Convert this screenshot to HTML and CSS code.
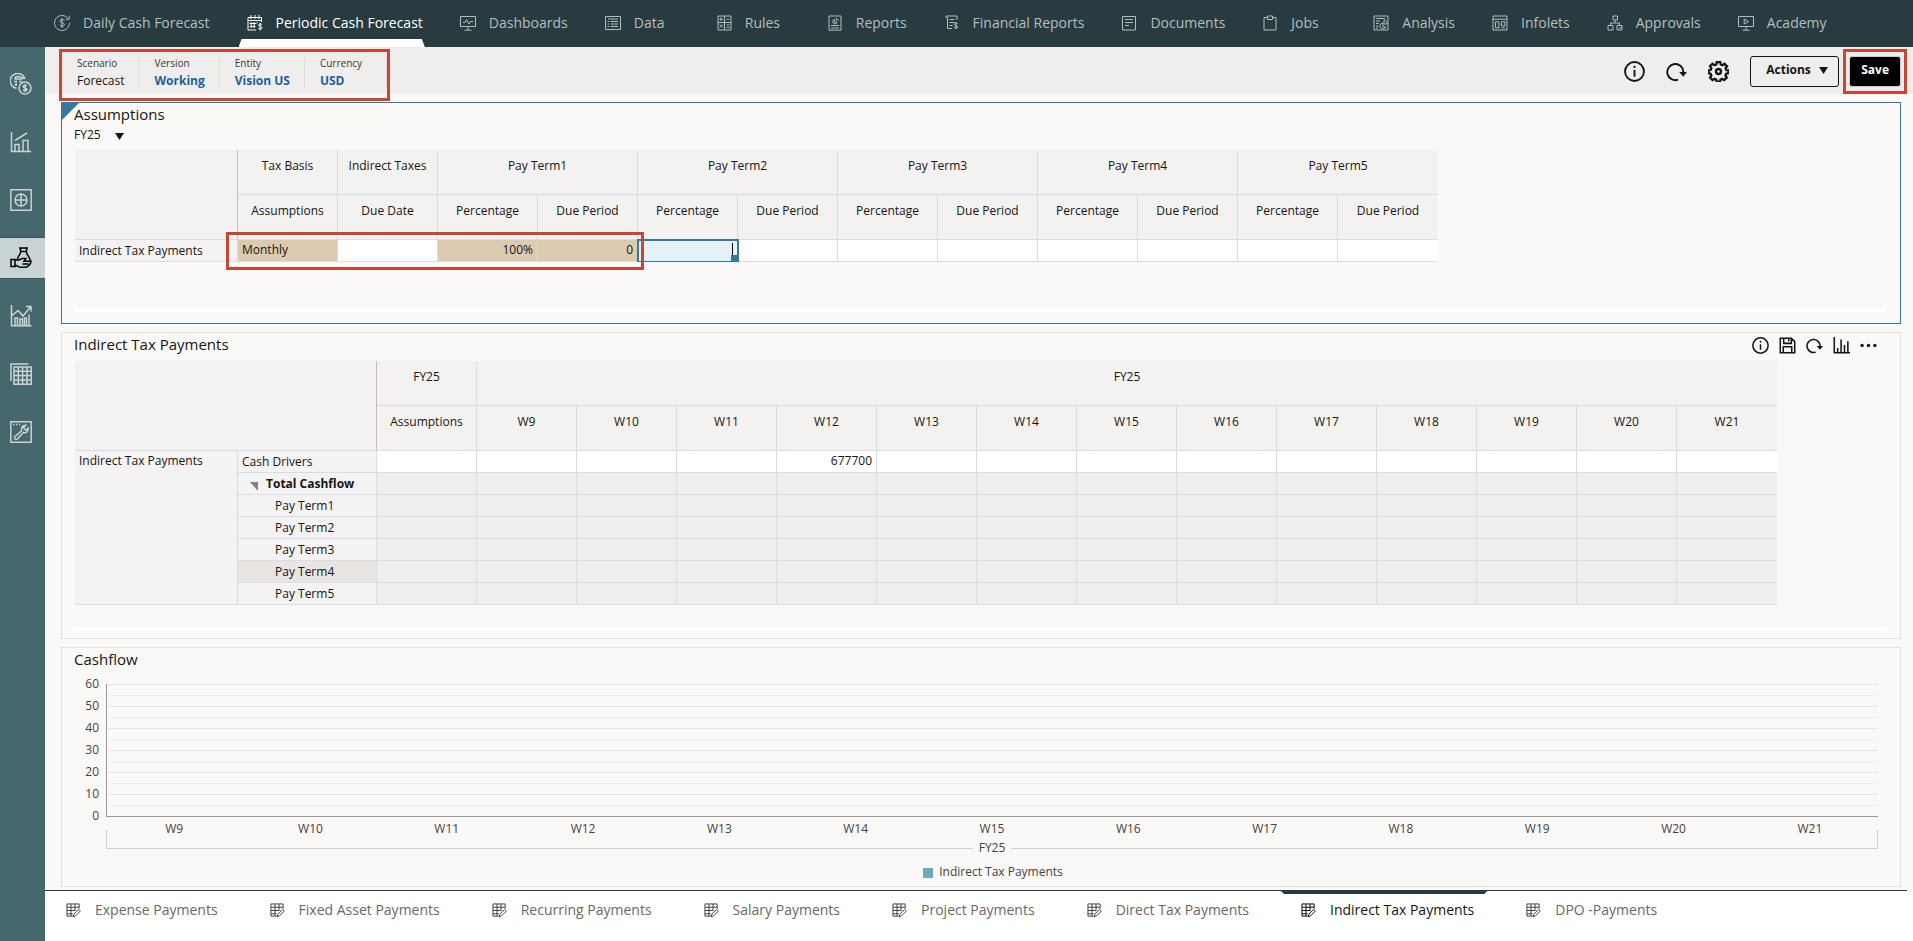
FILE: index.html
```html
<!DOCTYPE html>
<html lang="en">
<head>
<meta charset="utf-8">
<title>Periodic Cash Forecast</title>
<link rel="stylesheet" href="styles.css">
</head>
<body>
<svg class="defs" aria-hidden="true">
  <symbol id="i-info" viewBox="0 0 20 20"><circle cx="10" cy="10" r="9"/><path d="M10 8.5v6.5"/><circle class="dot" cx="10" cy="5.6" r="1.1"/></symbol>
  <symbol id="i-refresh" viewBox="0 0 20 20"><path d="M11.500 17.800A7.700 7.700 0 1 1 16.600 10.500v1"/><path class="dot" d="M12.600 10.500h7.400l-3.600 4.600z"/></symbol>
  <symbol id="i-gear" viewBox="0 0 20 20"><path d="M8.300 1h3.400l.4 2.300 1.700.7 1.900-1.400 2.400 2.400-1.400 1.900.7 1.700 1.900.2v2.900l-2 .5-.7 1.700 1.300 1.900-2.400 2.400-1.900-1.300-1.700.7-.4 2.100H8.300l-.4-2.100-1.700-.7-1.900 1.300-2.400-2.400 1.300-1.900-.7-1.700-2-.5V8.800l2-.2.7-1.700L1.900 5l2.400-2.400L6.200 4l1.700-.7z"/><circle cx="10" cy="10" r="2.400"/></symbol>
  <symbol id="i-form" viewBox="0 0 16 16"><path d="M14 6V1H1v13h6M1 4.500h13M1 8h9M1 11.500h6M5.300 1v13M9.600 1v7M7.500 14.800l1-3 5-5 1.800 1.800-5 5z"/></symbol>
</svg>

<header class="topbar">
  <nav class="topnav" aria-label="Clusters">
    <a href="#daily" class="topnav__item"><svg viewBox="0 0 16 16"><path d="M14 3.500A7.500 7.500 0 1 0 15.500 8M15.200.8v3.400h-3.500M10.500 5.500C10 4.600 6 4 5.800 6c-.1 2 4.700 1.500 4.600 3.700-.1 2.100-4.300 1.700-5 .3M8 3v10"/></svg>Daily Cash Forecast</a>
    <a href="#periodic" class="topnav__item topnav__item--active" aria-current="page"><svg viewBox="0 0 16 16"><path d="M14.500 7V2.500H1v12.500h8M1 5.500h13.500M4 0v4M8 0v4M12 0v4M4.200 7v6M7.200 7v6M10.200 7v1M2.500 8.500h7M2.500 11.500h6M15 9.500c-1-1-3.600-.7-3.500.7.100 1.500 3.400.9 3.500 2.500 0 1.600-2.800 1.700-3.700.6M13.200 8v7.500"/></svg>Periodic Cash Forecast</a>
    <a href="#dashboards" class="topnav__item"><svg viewBox="0 0 16 16"><path d="M.5 1.500h15v10H.5zM8 11.500v3.500M4.500 15.200h7M3 7.500h2l1.500-3 2.500 4.500 1.500-2.500H13"/></svg>Dashboards</a>
    <a href="#data" class="topnav__item"><svg viewBox="0 0 16 16"><path d="M.5 1.500h15v13H.5zM3 4h10M5.500 6.500H13M5.500 9H13M5.500 11.500H13M2.500 6.500h1.500M2.500 9h1.500M2.500 11.500h1.500"/></svg>Data</a>
    <a href="#rules" class="topnav__item"><svg viewBox="0 0 16 16"><path d="M2 1h13v14H2zM8.500 1v14M2 7.500h13M5 2.500v3.500M3.500 4.300H7M10.500 4.300H13M3.800 9.500l3 3M6.800 9.500l-3 3M10.500 10h3M10.500 12.500h3"/></svg>Rules</a>
    <a href="#reports" class="topnav__item"><svg viewBox="0 0 16 16"><path d="M2 1h12v14.200H2zM4 10.500h8M4 13h8M7.500 4.500A2.200 2.200 0 1 0 10 7H7.500zM9.500 3v2h2"/></svg>Reports</a>
    <a href="#financial" class="topnav__item"><svg viewBox="0 0 16 16"><path d="M13 5V1H2v1.500h1.500v11H8M5.500 4.500h5M5.500 7.500h5M5.500 10.500h3M13.500 8.500c-1-.9-3.200-.6-3.200.8.200 1.500 3.300 1 3.400 2.500 0 1.500-2.700 1.500-3.600.5M11.900 7v7"/></svg>Financial Reports</a>
    <a href="#documents" class="topnav__item"><svg viewBox="0 0 16 16"><path d="M1.500 1.500h13v13.500h-13zM4 4.500h8M4 7.500h8M4 10.500h4"/></svg>Documents</a>
    <a href="#jobs" class="topnav__item"><svg viewBox="0 0 16 16"><path d="M5 2.500H2v12.500h12V2.500h-3M5.500 1h5v3.500h-5z"/></svg>Jobs</a>
    <a href="#analysis" class="topnav__item"><svg viewBox="0 0 16 16"><path d="M1 1h14v14H1zM3 3.500h9M3 6h4M3 8.500h3M3 11h2.500M3 13h2M10 8a3 3 0 1 0 2.800 4H10zM11 5v4h3c0-2-1-4-3-4z"/></svg>Analysis</a>
    <a href="#infolets" class="topnav__item"><svg viewBox="0 0 16 16"><path d="M1 1h14v14H1zM1 4.200h14M3.500 6.800h3.500v6H3.500zM9.500 6.800h3.500v4H9.500zM9.500 12.800h3.500"/></svg>Infolets</a>
    <a href="#approvals" class="topnav__item"><svg viewBox="0 0 16 16"><path d="M6 1h4.500v4H6zM8.200 5v3M3.500 10.500V8h9v2.500M1 10.500h5v4.500H1zM10 10.500h5v4.500h-5zM11.500 12.800l1 1 2-2.300"/></svg>Approvals</a>
    <a href="#academy" class="topnav__item"><svg viewBox="0 0 16 16"><path d="M.5 1.500h15v10H.5zM8 11.500v3.500M4.500 15.200h7M6.200 4l4.300 2.500-4.300 2.500z"/></svg>Academy</a>
  </nav>
</header>

<div class="shell">
  <nav class="sidebar" aria-label="Cards">
    <a href="#cash" class="sidebar__item" aria-label="Cash overview"><svg viewBox="0 0 22 22"><path d="M15 6A7.500 7.500 0 1 0 6.500 15.300M5 6c0-3.500 6.500-3.500 6.500 0zM4 8.500h3M5.500 10.500h1.500M9 8.500h3M4.500 12h2.500M12 4l2 2"/><circle cx="15" cy="15" r="6"/><path d="M17 12.800c-1-1-4-.8-3.900.8.2 1.600 3.900 1.100 3.900 2.800 0 1.600-3.100 1.500-4.100.4M15 11.200v7.800"/></svg></a>
    <a href="#revenue" class="sidebar__item" aria-label="Revenue"><svg viewBox="0 0 22 22"><path d="M1.500 1v19.500H21M5 20v-6.500h4V20M13 20v-10.500h5V20M5 9.500L17 2"/></svg></a>
    <a href="#plan" class="sidebar__item" aria-label="Plan"><svg viewBox="0 0 22 22"><path d="M.8.800h20.400v20.400H.8z"/><circle cx="11" cy="11" r="6"/><path d="M11 5v12M5 11h12"/></svg></a>
    <a href="#payments" class="sidebar__item sidebar__item--active" aria-label="Payments" aria-current="page"><svg viewBox="0 0 22 22"><path d="M9 1h9M10.500 1v4.500c0 2-3.500 4.500-3 7M16.500 1v4.500c0 2 4 5 3.700 8M11 4.500h5M1 12.500h4v7H1zM5 13h4l3-1.500h4l-2 2.800h7c-.3 2.700-2.500 4.700-5 6H10l-5-2.500M12.500 17h6"/></svg></a>
    <a href="#trend" class="sidebar__item" aria-label="Trend"><svg viewBox="0 0 22 22"><path d="M1.500 0v20.700H21.500M1.500 11l6.500-5.500 5 5.500 8-9.500M16 1.500h5v5M5 20v-7h2.500V20M10 20v-6h2.500V20M14.500 20v-7h2V20M19 20V9.500"/></svg></a>
    <a href="#grid" class="sidebar__item" aria-label="Grid"><svg viewBox="0 0 22 22"><path d="M1 18V1h17.500M4 4h17.300v17.300H4zM8.300 4v17M12.600 4v17M17 4v17M4 8.300h17M4 12.600h17M4 17h17"/></svg></a>
    <a href="#settings" class="sidebar__item" aria-label="Settings"><svg viewBox="0 0 22 22"><path d="M.8.800h20.400v20.400H.8zM3 3.500h1.500M6 3.500h1.500M9 3.500h1M15.800 4.200c-3-.2-5.300 2.300-4.100 5.500L5 15.500c-1.500 1.900.6 3.800 2.500 2.500l5.800-6.500c3 .9 5.500-1.500 4.900-4.500L16 9.300l-2.600-2.500z"/></svg></a>
  </nav>

  <main class="main">
    <section class="context" aria-label="Point of view">
      <dl class="pov">
        <div class="pov__item"><dt>Scenario</dt><dd>Forecast</dd></div>
        <div class="pov__item"><dt>Version</dt><dd><a href="#version">Working</a></dd></div>
        <div class="pov__item"><dt>Entity</dt><dd><a href="#entity">Vision US</a></dd></div>
        <div class="pov__item"><dt>Currency</dt><dd><a href="#currency">USD</a></dd></div>
      </dl>
      <div class="tools">
        <button class="icon-btn icon-btn--lg" aria-label="Information"><svg><use href="#i-info"/></svg></button>
        <button class="icon-btn icon-btn--lg" aria-label="Refresh"><svg><use href="#i-refresh"/></svg></button>
        <button class="icon-btn icon-btn--lg" aria-label="Settings"><svg class="heavy"><use href="#i-gear"/></svg></button>
        <button class="btn">Actions<svg class="caret" viewBox="0 0 9 7"><path d="M0 0h9L4.500 7z"/></svg></button>
        <span class="mark mark--save"><button class="btn btn--primary">Save</button></span>
      </div>
    </section>

    <div class="panels">
      <section class="panel panel--focus">
        <h2 class="panel__title">Assumptions</h2>
        <label class="year"><select aria-label="Year"><option>FY25</option></select><svg class="caret" viewBox="0 0 9 7"><path d="M0 0h9L4.500 7z"/></svg></label>
        <div class="sheet-wrap">
          <div class="sheet-scroll">
            <table class="sheet sheet--assumptions">
              <colgroup><col class="c-dim"><col span="12"></colgroup>
              <thead>
                <tr><td class="corner" rowspan="2"></td><th>Tax Basis</th><th>Indirect Taxes</th><th colspan="2">Pay Term1</th><th colspan="2">Pay Term2</th><th colspan="2">Pay Term3</th><th colspan="2">Pay Term4</th><th colspan="2" class="last">Pay Term5</th></tr>
                <tr><th>Assumptions</th><th>Due Date</th><th>Percentage</th><th>Due Period</th><th>Percentage</th><th>Due Period</th><th>Percentage</th><th>Due Period</th><th>Percentage</th><th>Due Period</th><th>Percentage</th><th class="last">Due Period</th></tr>
              </thead>
              <tbody>
                <tr><th scope="row">Indirect Tax Payments</th><td class="dirty text">Monthly</td><td></td><td class="dirty">100%</td><td class="dirty">0</td><td class="editing"><input aria-label="Pay Term2 Percentage"><span class="cursor"></span></td><td></td><td></td><td></td><td></td><td></td><td></td><td class="last"></td></tr>
              </tbody>
            </table>
          </div>
          <span class="mark mark--row"></span>
        </div>
        <div class="track"></div>
      </section>

      <section class="panel panel--payments">
        <div class="panel__head">
          <h2 class="panel__title">Indirect Tax Payments</h2>
          <div class="panel__tools">
            <button class="icon-btn" aria-label="Information"><svg><use href="#i-info"/></svg></button>
            <button class="icon-btn" aria-label="Save"><svg viewBox="0 0 20 20"><path d="M1.500 1.500h13l4 4v13h-17zM5.500 1.500v6h9v-6M5 18.500v-7h10v7M11.500 2v3"/></svg></button>
            <button class="icon-btn" aria-label="Refresh"><svg><use href="#i-refresh"/></svg></button>
            <button class="icon-btn" aria-label="Chart"><svg viewBox="0 0 20 20"><path d="M1.500 0v18.500H20M5.500 18v-5M9.500 18V3M13.500 18V9.500M17.500 18V5"/></svg></button>
            <button class="icon-btn" aria-label="More"><svg viewBox="0 0 20 20"><g class="dot"><circle cx="2.500" cy="10" r="2"/><circle cx="10" cy="10" r="2"/><circle cx="17.500" cy="10" r="2"/></g></svg></button>
          </div>
        </div>
        <div class="sheet-scroll">
          <table class="sheet sheet--payments">
            <colgroup><col class="c-dim"><col class="c-account"><col span="14"></colgroup>
            <thead>
              <tr><td class="corner" rowspan="2" colspan="2"></td><th>FY25</th><th colspan="13" class="last">FY25</th></tr>
              <tr><th>Assumptions</th><th>W9</th><th>W10</th><th>W11</th><th>W12</th><th>W13</th><th>W14</th><th>W15</th><th>W16</th><th>W17</th><th>W18</th><th>W19</th><th>W20</th><th class="last">W21</th></tr>
            </thead>
            <tbody>
              <tr><th scope="rowgroup" rowspan="7" class="group">Indirect Tax Payments</th><th scope="row">Cash Drivers</th><td></td><td></td><td></td><td></td><td>677700</td><td></td><td></td><td></td><td></td><td></td><td></td><td></td><td></td><td class="last"></td></tr>
              <tr class="ro"><th scope="row" class="total"><svg class="twist" viewBox="0 0 8 9"><path d="M0 0h8v9z"/></svg>Total Cashflow</th><td></td><td></td><td></td><td></td><td></td><td></td><td></td><td></td><td></td><td></td><td></td><td></td><td></td><td class="last"></td></tr>
              <tr class="ro"><th scope="row" class="child">Pay Term1</th><td></td><td></td><td></td><td></td><td></td><td></td><td></td><td></td><td></td><td></td><td></td><td></td><td></td><td class="last"></td></tr>
              <tr class="ro"><th scope="row" class="child">Pay Term2</th><td></td><td></td><td></td><td></td><td></td><td></td><td></td><td></td><td></td><td></td><td></td><td></td><td></td><td class="last"></td></tr>
              <tr class="ro"><th scope="row" class="child">Pay Term3</th><td></td><td></td><td></td><td></td><td></td><td></td><td></td><td></td><td></td><td></td><td></td><td></td><td></td><td class="last"></td></tr>
              <tr class="ro"><th scope="row" class="child hover">Pay Term4</th><td></td><td></td><td></td><td></td><td></td><td></td><td></td><td></td><td></td><td></td><td></td><td></td><td></td><td class="last"></td></tr>
              <tr class="ro"><th scope="row" class="child">Pay Term5</th><td></td><td></td><td></td><td></td><td></td><td></td><td></td><td></td><td></td><td></td><td></td><td></td><td></td><td class="last"></td></tr>
            </tbody>
          </table>
        </div>
        <div class="track track--low"></div>
      </section>

      <section class="panel panel--chart">
        <h2 class="panel__title">Cashflow</h2>
        <div class="chart">
          <div class="chart__y"><span>60</span><span>50</span><span>40</span><span>30</span><span>20</span><span>10</span><span>0</span></div>
          <div class="chart__plot"><i></i><i></i><i></i><i></i><i></i><i></i></div>
          <div class="chart__x">
            <span>W9</span><span>W10</span><span>W11</span><span>W12</span><span>W13</span><span>W14</span><span>W15</span><span>W16</span><span>W17</span><span>W18</span><span>W19</span><span>W20</span><span>W21</span>
            <div class="chart__bracket"></div>
          </div>
          <div class="chart__year"><span>FY25</span></div>
        </div>
        <div class="legend"><i class="legend__swatch"></i>Indirect Tax Payments</div>
      </section>
    </div>

    <nav class="tabs" aria-label="Forms">
      <a href="#expense" class="tabs__item"><svg><use href="#i-form"/></svg>Expense Payments</a>
      <a href="#fixed" class="tabs__item"><svg><use href="#i-form"/></svg>Fixed Asset Payments</a>
      <a href="#recurring" class="tabs__item"><svg><use href="#i-form"/></svg>Recurring Payments</a>
      <a href="#salary" class="tabs__item"><svg><use href="#i-form"/></svg>Salary Payments</a>
      <a href="#project" class="tabs__item"><svg><use href="#i-form"/></svg>Project Payments</a>
      <a href="#direct" class="tabs__item"><svg><use href="#i-form"/></svg>Direct Tax Payments</a>
      <a href="#indirect" class="tabs__item tabs__item--active" aria-current="page"><svg><use href="#i-form"/></svg>Indirect Tax Payments</a>
      <a href="#dpo" class="tabs__item"><svg><use href="#i-form"/></svg>DPO -Payments</a>
    </nav>
  </main>
</div>
</body>
</html>
```

FILE: styles.css
```css
* { box-sizing: border-box; }

body {
  margin: 0;
  min-height: 100vh;
  display: flex;
  flex-direction: column;
  background: #fbf9f8;
  color: #161513;
  font: 12px/16px "Open Sans", "Noto Sans", sans-serif;
}

a { color: inherit; text-decoration: none; }
h2, dl, dd { margin: 0; }
svg { fill: none; stroke: currentColor; flex: none; }
button, select, input { font: inherit; color: inherit; }
.defs { position: absolute; width: 0; height: 0; }
.dot { fill: currentColor; stroke: none; }
.caret { width: 9px; height: 7px; fill: currentColor; stroke: none; }

/* Top navigation */
.topbar { background: #273b40; }
.topnav {
  display: flex;
  gap: 27px;
  height: 47px;
  padding-left: 46px;
  overflow: hidden;
}
.topnav__item {
  position: relative;
  display: flex;
  align-items: center;
  gap: 13px;
  min-width: 84px;
  padding: 0 2px 2px 8px;
  color: #b5bebf;
  font-size: 14px;
  white-space: nowrap;
}
.topnav__item svg { width: 16px; height: 16px; }
.topnav__item--active { color: #fff; }
.topnav__item--active::after {
  content: "";
  position: absolute;
  inset: auto 0 0;
  height: 8px;
  background: #fff;
  clip-path: polygon(3px 0, calc(100% - 3px) 0, 100% 100%, 0 100%);
}

.shell { flex: 1; display: flex; }

/* Sidebar */
.sidebar {
  flex: none;
  width: 45px;
  padding-top: 16px;
  display: flex;
  flex-direction: column;
  gap: 16px;
  background: #46686d;
  color: #c9d3d3;
}
.sidebar__item {
  height: 42px;
  padding-left: 10px;
  display: flex;
  align-items: center;
}
.sidebar__item svg { width: 22px; height: 22px; stroke-width: 1.500; }
.sidebar__item--active {
  background: #c7d3d5;
  color: #000;
  border: solid #37555a;
  border-width: 1px 0;
}

.main {
  flex: 1;
  min-width: 0;
  display: flex;
  flex-direction: column;
}

/* Context bar */
.context {
  display: flex;
  justify-content: space-between;
  height: 47px;
  padding: 2px 6px 0 14px;
  background: #f0eeec;
}
.pov {
  display: flex;
  height: 52px;
  padding: 5px 0 10px;
  border: 3px solid #c74634;
  position: relative;
}
.pov__item { padding: 0 14px 0 15px; border-right: 1px solid #dfddda; }
.pov__item:last-child { padding-right: 24px; }
.pov dt { font-size: 10px; line-height: 12px; color: #3a3733; }
.pov dd { line-height: 24px; }
.pov a { color: #1b5fa3; font-weight: 700; }

.tools { display: flex; align-items: center; height: 44px; }
.icon-btn {
  padding: 0;
  border: 0;
  background: none;
  width: 17px;
  height: 17px;
}
.icon-btn svg { display: block; width: 100%; height: 100%; stroke-width: 1.800; }
.icon-btn .heavy { stroke-width: 2.200; }
.icon-btn--lg { width: 21px; height: 21px; margin-right: 21px; }
.btn {
  height: 31px;
  padding: 0 9px 2px 15px;
  display: flex;
  align-items: center;
  gap: 8px;
  border: 1px solid #161513;
  border-radius: 3px;
  background: #edeeed;
  font-weight: 700;
  white-space: nowrap;
}
.btn--primary { padding: 0 11px 2px; border-color: #c8ccd0; background: #000; color: #fff; }
.tools > .btn { width: 89px; }
.mark { border: 3px solid #c74634; }
.mark--save { margin-left: 4px; padding: 4px 3px; }

/* Panels */
.panels {
  flex: 1;
  display: flex;
  flex-direction: column;
  gap: 8px;
  padding: 8px 12px 3px 16px;
}
.panel {
  position: relative;
  padding: 0 14px 11px 12px;
  border: 1px solid #e1e1df;
}
.panel--payments { padding-bottom: 7px; }
.panel--focus { border-color: #37799b; }
.panel--focus::before {
  content: "";
  position: absolute;
  inset: 0 auto auto 0;
  width: 17px;
  height: 17px;
  background: #37799b;
  clip-path: polygon(0 0, 100% 0, 0 100%);
}
.panel__title {
  position: relative;
  padding-bottom: 2px;
  font-size: 15px;
  font-weight: 400;
  line-height: 22px;
}
.panel__head { display: flex; justify-content: space-between; margin-bottom: 4px; }
.panel__tools { display: flex; align-items: center; gap: 10px; padding-right: 9px; }

.year { display: inline-flex; align-items: center; height: 16px; margin-bottom: 7px; vertical-align: top; }
.year select {
  appearance: none;
  width: 41px;
  padding: 0;
  border: 0;
  background: none;
}
.year .caret { margin-top: 2px; }

.sheet-wrap { position: relative; }
.sheet-scroll { overflow-x: auto; padding-left: 1px; }
.sheet { border-spacing: 0; table-layout: fixed; }
.sheet--assumptions { width: 1363px; }
.sheet--payments { width: 1702px; }
.c-dim { width: 163px; }
.c-account { width: 139px; }
.sheet th, .sheet td {
  padding: 0 4px;
  border: solid #d5dde5;
  border-width: 0 1px 1px 0;
  font-weight: 400;
  white-space: nowrap;
}
.sheet thead th, .sheet .corner { background: #f3f2f1; height: 45px; vertical-align: top; padding-top: 8px; }
.sheet .corner { border-right-color: #bcbfc1; }
.sheet tbody td, .sheet tbody th { height: 22px; line-height: 18px; }
.sheet tbody td { background: #fff; text-align: right; padding-bottom: 2px; }
.sheet tbody th { background: #f4f2f2; text-align: left; }
.sheet .group { vertical-align: top; padding-top: 1px; }
.sheet tbody .ro td { background: #f0efed; }
.sheet tbody .dirty { background: #dccbae; }
.sheet tbody .text { text-align: left; }
.sheet .last { border-right: 0; }
.sheet tbody .total { font-weight: 700; padding-left: 12px; }
.twist { width: 8px; height: 9px; margin: 0 8px -3px 0; fill: #7c868a; stroke: none; }
.sheet tbody .child { padding-left: 37px; }
.sheet tbody .hover { background: #e9e5e2; }
.sheet tbody .editing { position: relative; padding: 0; background: #e4f1f7; outline: 2px solid #37799b; outline-offset: -1px; }
.editing input {
  display: block;
  width: 100%;
  height: 20px;
  padding: 0 4px;
  border: 0;
  background: none;
  text-align: right;
}
.editing::after {
  content: "";
  position: absolute;
  inset: auto 0 0 auto;
  width: 6px;
  height: 6px;
  background: #37799b;
}
.cursor {
  position: absolute;
  inset: 3px 4px 3px auto;
  width: 1px;
  background: #000;
}
.mark--row {
  position: absolute;
  left: 152px;
  top: 82px;
  width: 418px;
  height: 38px;
}
.track { height: 4px; margin-top: 46px; background: #fff; }
.track--low { margin-top: 22px; }

/* Chart */
.panel--chart { flex: 1; padding-right: 22px; padding-bottom: 2px; }
.chart {
  display: grid;
  grid-template-columns: 32px 1fr;
  padding-top: 12px;
  color: #45423f;
}
.chart__y {
  display: flex;
  flex-direction: column;
  height: 133px;
  text-align: right;
  padding-right: 7px;
}
.chart__y span { height: 22px; flex: none; line-height: 22px; translate: 0 -50%; }
.chart__plot { border: solid #9a9998; border-width: 0 0 1px 1px; }
.chart__plot i {
  display: block;
  height: 22px;
  background: linear-gradient(#e3e4e8 1px, transparent 1px, transparent 11px, #f0efee 11px, #f0efee 12px, transparent 12px);
}
.chart__x {
  grid-column: 2;
  position: relative;
  display: grid;
  grid-template-columns: repeat(13, 1fr);
  height: 32px;
  line-height: 24px;
  text-align: center;
}
.chart__bracket {
  position: absolute;
  inset: 13px 0 0;
  border: solid #cfcedd;
  border-width: 0 1px 1px;
}
.chart__year {
  grid-column: 2;
  position: relative;
  height: 16px;
  margin-top: -9px;
  text-align: center;
}
.chart__year span { padding: 0 6px; background: #fbf9f8; display: inline-block; }
.legend {
  display: flex;
  justify-content: center;
  align-items: center;
  gap: 6px;
  margin-top: 8px;
  padding-left: 34px;
  color: #45423f;
}
.legend__swatch { width: 10px; height: 10px; margin-top: 2px; background: #6badb6; }

/* Bottom tabs */
.tabs {
  display: flex;
  gap: 28px;
  height: 51px;
  padding: 0 0 0 9px;
  margin-right: 6px;
  border-top: 1px solid #273b40;
  background: #fff;
  box-shadow: 6px 1px #fff;
}
.tabs__item {
  position: relative;
  height: 38px;
  display: flex;
  align-items: center;
  gap: 14px;
  padding: 0 12px;
  color: #6a6866;
  font-size: 14px;
  white-space: nowrap;
}
.tabs__item svg { width: 15px; height: 15px; color: #3b3a39; }
.tabs__item--active { color: #161513; }
.tabs__item--active svg { color: #000; }
.tabs__item--active::before {
  content: "";
  position: absolute;
  inset: 0 -1px auto -8px;
  height: 3px;
  background: #273b40;
  clip-path: polygon(0 0, 100% 0, calc(100% - 3px) 100%, 3px 100%);
}
```
